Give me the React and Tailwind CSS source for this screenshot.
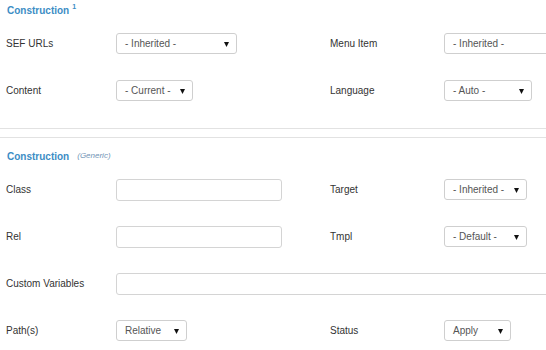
import React from 'react';

const font = { fontFamily: '"Liberation Sans", Arial, sans-serif' };

function Select({ value, width, clip }) {
    return (
        <div
            className={`h-[21px] ${width} flex items-center justify-between pl-[8px] pr-[7px] border border-[#cfcfcf] rounded-[3px] bg-white text-[10px] text-[#555] shrink-0`}
        >
            <span>{value}</span>
            {!clip && (
                <svg width="5" height="6" viewBox="0 0 5 6">
                    <path d="M0 1 L5 1 L2.5 6 Z" fill="#111" />
                </svg>
            )}
        </div>
    );
}

function Input({ width }) {
    return <div className={`h-[22px] ${width} border border-[#d4d4d4] rounded-[3px] bg-white shrink-0`} />;
}

function Field({ label, children, labelWidth = 'w-[110px]' }) {
    return (
        <div className="flex items-center">
            <div className={`${labelWidth} text-[10px] text-[#333] shrink-0`}>{label}</div>
            {children}
        </div>
    );
}

function Row({ left, right }) {
    return (
        <div className="h-[47px] flex items-center pl-[6px]">
            <div className="w-[318px] shrink-0">{left}</div>
            {right && <div className="pl-[6px]">{right}</div>}
        </div>
    );
}

export default function App() {
    return (
        <div className="w-[546px] h-[350px] overflow-hidden bg-white" style={font}>
            <div className="w-[700px]">
                <div className="h-[20px] flex items-center pl-[7px]">
                    <span className="text-[10px] font-bold text-[#3c8dc5]">Construction</span>
                    <span className="text-[7px] font-bold text-[#3c8dc5] ml-[3px] -mt-[6px]">1</span>
                </div>

                <Row
                    left={<Field label="SEF URLs"><Select value="- Inherited -" width="w-[121px]" /></Field>}
                    right={<Field label="Menu Item" labelWidth="w-[114px]"><Select value="- Inherited -" width="w-[140px]" clip /></Field>}
                />
                <Row
                    left={<Field label="Content"><Select value="- Current -" width="w-[77px]" /></Field>}
                    right={<Field label="Language" labelWidth="w-[114px]"><Select value="- Auto -" width="w-[88px]" /></Field>}
                />

                <div className="mt-[14px] border-t border-[#e2e2e2]" />
                <div className="mt-[8px] border-t border-[#e2e2e2]" />

                <div className="h-[28px] flex items-center pl-[7px] mt-[4px] -mb-[4px]">
                    <span className="text-[10px] font-bold text-[#3c8dc5]">Construction</span>
                    <span className="text-[8px] italic text-[#6f93b5] ml-[8px]">(Generic)</span>
                </div>

                <Row
                    left={<Field label="Class"><Input width="w-[166px]" /></Field>}
                    right={<Field label="Target" labelWidth="w-[114px]"><Select value="- Inherited -" width="w-[83px]" /></Field>}
                />
                <Row
                    left={<Field label="Rel"><Input width="w-[166px]" /></Field>}
                    right={<Field label="Tmpl" labelWidth="w-[114px]"><Select value="- Default -" width="w-[83px]" /></Field>}
                />
                <div className="h-[47px] flex items-center pl-[6px]">
                    <Field label="Custom Variables"><Input width="w-[520px]" /></Field>
                </div>
                <Row
                    left={<Field label="Path(s)"><Select value="Relative" width="w-[71px]" /></Field>}
                    right={<Field label="Status" labelWidth="w-[114px]"><Select value="Apply" width="w-[67px]" /></Field>}
                />
            </div>
        </div>
    );
}
